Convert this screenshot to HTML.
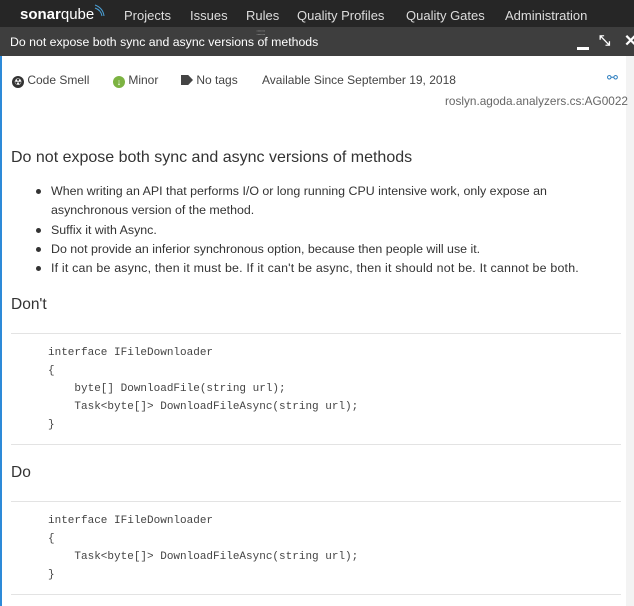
<!DOCTYPE html>
<html><head><style>
*{margin:0;padding:0;box-sizing:border-box}
body{width:634px;height:606px;overflow:hidden;background:#fff;font-family:"Liberation Sans",sans-serif;color:#333;position:relative}
.nav{position:absolute;left:0;top:0;width:634px;height:27px;background:#262626;color:#ddd;font-size:13px}
.nav span{position:absolute;top:8px}
.title{position:absolute;left:0;top:27px;width:634px;height:29px;background:#3e3e3e;color:#fff;font-size:12.3px}
.t{position:absolute}
.blue{position:absolute;left:0;top:56px;width:2px;height:550px;background:#2d8ad8}
.rs{position:absolute;left:626px;top:56px;width:8px;height:550px;background:#f3f3f3}
.meta{position:absolute;top:73px;font-size:12px;color:#444}
li{position:absolute;left:51px;font-size:12.4px;color:#333;list-style:none;line-height:19px}
li:before{content:"";position:absolute;left:-15px;top:7px;width:5px;height:5px;border-radius:50%;background:#333}
.hr{position:absolute;left:11px;width:610px;height:1px;background:#e3e3e3}
.code{position:absolute;left:48px;font-family:"Liberation Mono",monospace;font-size:11px;color:#444;line-height:18px;white-space:pre}
h3{position:absolute;left:11px;font-weight:normal;font-size:15.5px;color:#333}
</style></head><body>
<div class="nav">
<span style="left:20px;top:6px;font-size:15px;color:#fff;font-weight:bold">sonar<span style="position:static;font-weight:normal">qube</span></span>
<svg style="position:absolute;left:94px;top:3px" width="12" height="14"><path d="M1 2 Q9 5 10 13 M1 5 Q7 7 8 13" stroke="#4b9fd5" fill="none" stroke-width="1"/></svg>
<span style="left:124px">Projects</span><span style="left:190px">Issues</span><span style="left:246px">Rules</span><span style="left:297px">Quality Profiles</span><span style="left:406px">Quality Gates</span><span style="left:505px">Administration</span>
</div>
<div class="title"><span class="t" style="left:10px;top:8px">Do not expose both sync and async versions of methods</span>
<span class="t" style="left:256px;top:1px;color:#888;font-size:8px;letter-spacing:-1px">:::::::</span>
<div class="t" style="left:577px;top:20px;width:12px;height:3px;background:#fff"></div>
<span class="t" style="left:599px;top:5px;font-size:14px;font-weight:bold">⤡</span>
<span class="t" style="left:624px;top:4px;font-size:16px;font-weight:bold">✕</span>
</div>
<div class="blue"></div><div class="rs"></div>
<span class="meta" style="left:12px"><span style="display:inline-block;width:12px;height:12px;border-radius:50%;background:#333;color:#fff;font-size:9px;text-align:center;line-height:12px;vertical-align:-1px">☢</span> Code Smell</span>
<span class="meta" style="left:113px"><span style="display:inline-block;width:12px;height:12px;border-radius:50%;background:#7cb342;color:#fff;font-size:9px;text-align:center;line-height:12px;vertical-align:-1px">↓</span> Minor</span>
<span class="meta" style="left:181px"><span style="display:inline-block;width:12px;height:10px;background:#444;clip-path:polygon(0 0,60% 0,100% 50%,60% 100%,0 100%);vertical-align:-1px"></span> No tags</span>
<span class="meta" style="left:262px">Available Since September 19, 2018</span>
<span class="meta" style="left:607px;color:#2d7ebf;font-size:13px;top:70px">⚯</span>
<span class="meta" style="left:445px;top:94px;color:#666;font-size:11.8px">roslyn.agoda.analyzers.cs:AG0022</span>
<h3 style="top:149px;font-size:16px">Do not expose both sync and async versions of methods</h3>
<ul>
<li style="top:182px">When writing an API that performs I/O or long running CPU intensive work, only expose an</li>
<li style="top:201px">asynchronous version of the method.</li>
<li style="top:221px">Suffix it with Async.</li>
<li style="top:240px">Do not provide an inferior synchronous option, because then people will use it.</li>
<li style="top:259px;letter-spacing:0.2px">If it can be async, then it must be. If it can't be async, then it should not be. It cannot be both.</li>
</ul>
<style>li:nth-child(2):before{display:none}</style>
<h3 style="top:296px">Don't</h3>
<div class="hr" style="top:333px"></div>
<div class="code" style="top:344px">interface IFileDownloader
{
    byte[] DownloadFile(string url);
    Task&lt;byte[]&gt; DownloadFileAsync(string url);
}</div>
<div class="hr" style="top:444px"></div>
<h3 style="top:464px">Do</h3>
<div class="hr" style="top:501px"></div>
<div class="code" style="top:512px">interface IFileDownloader
{
    Task&lt;byte[]&gt; DownloadFileAsync(string url);
}</div>
<div class="hr" style="top:594px"></div>
</body></html>
